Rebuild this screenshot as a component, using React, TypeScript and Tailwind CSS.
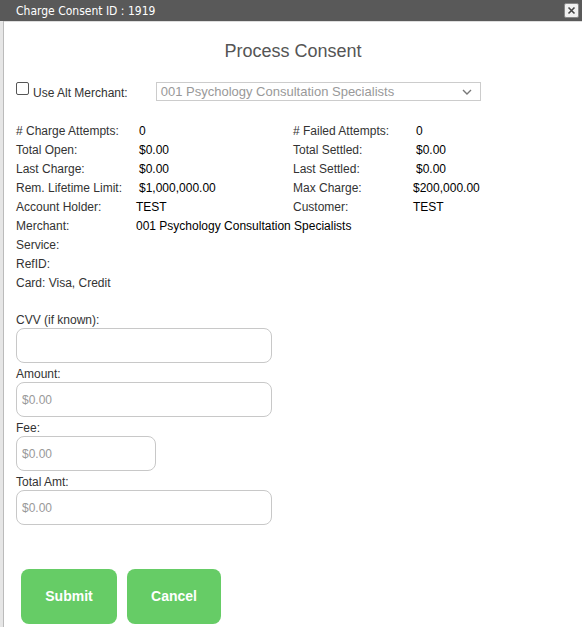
import React from "react";

const rowsLeft: [string, string, string][] = [
  ["# Charge Attempts:", "0", "ml-[21px]"],
  ["Total Open:", "$0.00", "ml-[21px]"],
  ["Last Charge:", "$0.00", "ml-[21px]"],
  ["Rem. Lifetime Limit:", "$1,000,000.00", "ml-[21px]"],
  ["Account Holder:", "TEST", "ml-[18px]"],
];
const rowsRight: [string, string, string][] = [
  ["# Failed Attempts:", "0", "ml-[21px]"],
  ["Total Settled:", "$0.00", "ml-[21px]"],
  ["Last Settled:", "$0.00", "ml-[21px]"],
  ["Max Charge:", "$200,000.00", "ml-[18px]"],
  ["Customer:", "TEST", "ml-[18px]"],
];

function Row({ label, value, off }: { label: string; value: string; off: string }) {
  return (
    <div className="flex h-[19px] shrink-0 items-center">
      <span className="w-[102px] shrink-0 whitespace-nowrap text-[#333]">{label}</span>
      <span className={`${off} whitespace-nowrap text-black`}>{value}</span>
    </div>
  );
}

function Field({ label, w, placeholder }: { label: string; w: string; placeholder?: string }) {
  return (
    <div className="flex shrink-0 flex-col">
      <div className="h-[19px] pt-[4px] leading-[14px] text-[#333]">{label}</div>
      <div className={`${w} flex h-[35px] items-center rounded-[8px] border border-[#c8c8c8] bg-white px-[5px] text-[12px] text-[#999]`}>
        {placeholder}
      </div>
    </div>
  );
}

export default function App() {
  return (
    <div className="h-[627px] w-[582px] overflow-hidden bg-white text-[12px]" style={{ fontFamily: '"Liberation Sans", Arial, sans-serif' }}>
      <div className="flex h-[21px] items-center justify-between bg-[#595959] pl-[16px] pr-[3px]">
        <span className="text-[12px] text-white" style={{ fontFamily: '"DejaVu Sans Condensed", "Liberation Sans", sans-serif', fontWeight: 500 }}>
          Charge Consent ID : 1919
        </span>
        <div className="flex h-[15px] w-[15px] items-center justify-center rounded-[2px] border border-[#888] bg-[#f0f0f0]">
          <svg width="9" height="9" viewBox="0 0 9 9">
            <path d="M1.5 1.5L7.5 7.5M7.5 1.5L1.5 7.5" stroke="#444" strokeWidth="1.6" />
          </svg>
        </div>
      </div>
      <div className="flex h-[606px]">
        <div className="w-[4px] shrink-0 border-r border-[#bbb] bg-[#e6e6e6]" />
        <div className="flex flex-1 flex-col border-t border-[#ddd] pl-[12px] *:shrink-0">
          <div className="mt-[18px] pr-[12px] text-center text-[18px] leading-[22px] text-[#555]">Process Consent</div>
          <div className="mt-[20px] flex h-[19px] items-center">
            <div className="mt-[-6px] h-[13px] w-[13px] rounded-[2px] border border-[#555] bg-white" />
            <span className="ml-[4px] mt-[3px] text-[#333]">Use Alt Merchant:</span>
            <div className="ml-[28px] flex h-[19px] w-[325px] items-center justify-between border border-[#ccc] bg-white pl-[4px] pr-[8px] text-[13px] text-[#999]">
              <span>001 Psychology Consultation Specialists</span>
              <svg width="10" height="6" viewBox="0 0 10 6">
                <path d="M1 1L5 5L9 1" stroke="#777" strokeWidth="1.4" fill="none" />
              </svg>
            </div>
          </div>
          <div className="mt-[20px] flex">
            <div className="flex w-[277px] flex-col">
              {rowsLeft.map((r) => (
                <Row key={r[0]} label={r[0]} value={r[1]} off={r[2]} />
              ))}
            </div>
            <div className="flex flex-col">
              {rowsRight.map((r) => (
                <Row key={r[0]} label={r[0]} value={r[1]} off={r[2]} />
              ))}
            </div>
          </div>
          <Row label="Merchant:" value="001 Psychology Consultation Specialists" off="ml-[18px]" />
          <Row label="Service:" value="" off="" />
          <Row label="RefID:" value="" off="" />
          <div className="flex h-[19px] items-center text-[#333]">Card: Visa, Credit</div>
          <div className="mt-[17px] flex flex-col">
            <Field label="CVV (if known):" w="w-[256px]" />
            <Field label="Amount:" w="w-[256px]" placeholder="$0.00" />
            <Field label="Fee:" w="w-[140px]" placeholder="$0.00" />
            <Field label="Total Amt:" w="w-[256px]" placeholder="$0.00" />
          </div>
          <div className="ml-[5px] mt-[44px] flex gap-[10px]">
            <button className="h-[55px] w-[96px] rounded-[8px] bg-[#66cc66] text-[14px] font-bold text-white">Submit</button>
            <button className="h-[55px] w-[94px] rounded-[8px] bg-[#66cc66] text-[14px] font-bold text-white">Cancel</button>
          </div>
        </div>
      </div>
    </div>
  );
}
